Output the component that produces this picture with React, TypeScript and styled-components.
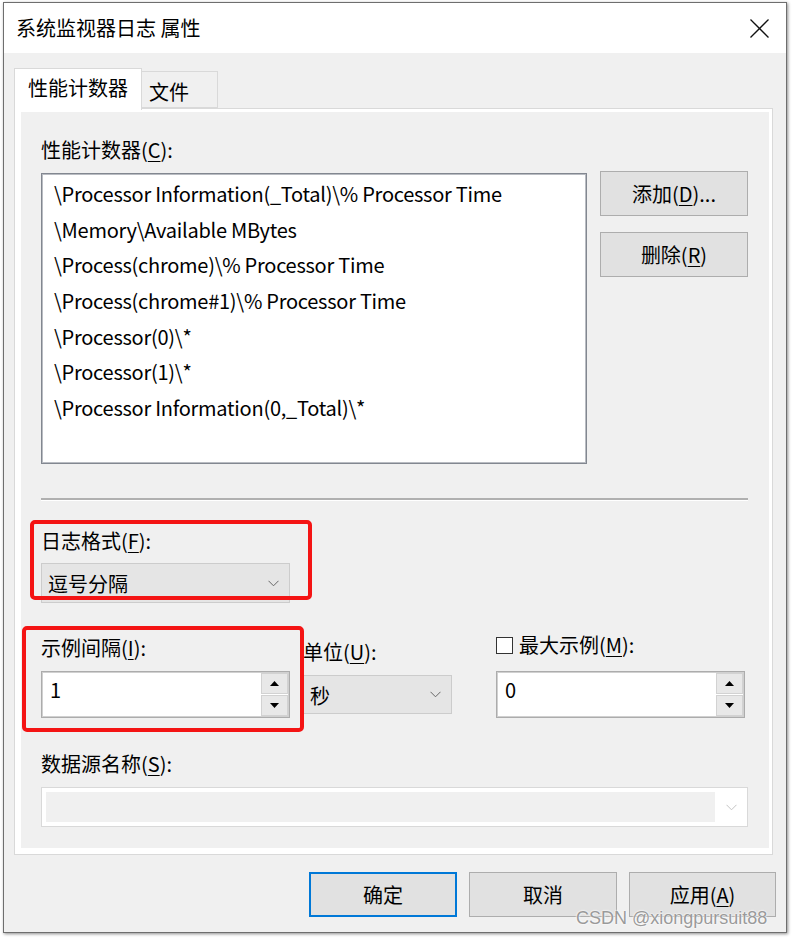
import React from "react";
import styled, { createGlobalStyle } from "styled-components";

const Global = createGlobalStyle`
  html, body { margin: 0; padding: 0; background: #ffffff; }
  body { font-family: "Noto Sans CJK SC", "Noto Sans", sans-serif; color: #000; }
  * { box-sizing: border-box; }
`;

const Page = styled.div`
  position: relative;
  width: 792px;
  height: 939px;
  overflow: hidden;
  background: #ffffff;
  padding: 2px 0 0 3px;
`;

const Window = styled.div`
  width: 784px;
  height: 931px;
  border: 1px solid #6e6e6e;
  box-shadow: 1px 1px 3px rgba(0, 0, 0, 0.45);
  display: flex;
  flex-direction: column;
  background: #f0f0f0;
`;

const TitleBar = styled.div`
  height: 50px;
  flex: none;
  background: #ffffff;
  display: flex;
  align-items: center;
  justify-content: space-between;
  padding: 0 17px 0 12px;
`;

const Title = styled.div`
  font-size: 20px;
  line-height: 24px;
  color: #000;
`;

const CloseBtn = styled.div`
  width: 20px;
  height: 20px;
  display: flex;
  align-items: center;
  justify-content: center;
`;

const Body = styled.div`
  flex: 1;
  display: flex;
  flex-direction: column;
  padding: 15px 9px 0 10px;
`;

const TabRow = styled.div`
  display: flex;
  align-items: flex-start;
  height: 40px;
  position: relative;
  z-index: 1;
`;

const Tab = styled.div<{ $active?: boolean }>`
  font-size: 20px;
  line-height: 24px;
  display: flex;
  align-items: center;
  border: 1px solid #d9d9d9;
  ${(p) =>
    p.$active
      ? `
    width: 128px;
    height: 42px;
    background: #ffffff;
    border-bottom: none;
    padding: 0 0 3px 13px;
  `
      : `
    width: 76px;
    height: 37px;
    margin-top: 3px;
    background: #f0f0f0;
    border-left: none;
    padding: 4px 0 0 7px;
  `}
`;

const Panel = styled.div`
  margin-right: 4px;
  height: 747px;
  border: 1px solid #d9d9d9;
  background: #ffffff;
  padding: 3px 3px 6px 6px;
  display: flex;
`;

const PanelInner = styled.div`
  flex: 1;
  background: #f0f0f0;
  padding: 26px 21px 0 20px;
  display: flex;
  flex-direction: column;
`;

const Label = styled.div<{ $mt?: number }>`
  font-size: 20px;
  line-height: 24px;
  height: 24px;
  white-space: nowrap;
  margin-top: ${(p) => p.$mt ?? 0}px;
  display: flex;
  align-items: center;
`;

const U = styled.span`
  text-decoration: underline;
  text-underline-offset: 3px;
  text-decoration-thickness: 1px;
`;

const CounterRow = styled.div`
  display: flex;
  align-items: flex-start;
  margin-top: 11px;
  gap: 13px;
`;

const ListBox = styled.div`
  width: 546px;
  height: 291px;
  background: #ffffff;
  border: 1px solid #828790;
  box-shadow: inset 0 0 0 1px #b9bcc2;
  padding: 2px 0 0 12px;
`;

const ListItem = styled.div`
  font-size: 20px;
  line-height: 35.67px;
  height: 35.67px;
  letter-spacing: -0.26px;
  white-space: nowrap;
`;

const SideButtons = styled.div`
  display: flex;
  flex-direction: column;
  gap: 16px;
  margin-top: -2px;
`;

const Button = styled.div<{ $primary?: boolean; $w?: number }>`
  width: ${(p) => p.$w ?? 148}px;
  height: 45px;
  background: #e1e1e1;
  border: ${(p) => (p.$primary ? "2px solid #0078d7" : "1px solid #adadad")};
  font-size: 20px;
  line-height: 24px;
  display: flex;
  align-items: center;
  justify-content: center;
  white-space: nowrap;
`;

const Separator = styled.div`
  margin-top: 34px;
  height: 3px;
  border-top: 2px solid #b0b0b0;
  border-bottom: 1px solid #ffffff;
`;

const Group = styled.div<{ $mt?: number; $w?: number }>`
  position: relative;
  margin-top: ${(p) => p.$mt ?? 0}px;
  width: ${(p) => (p.$w ? `${p.$w}px` : "auto")};
  display: flex;
  flex-direction: column;
  flex: none;
`;

const RedBox = styled.div<{ $l: number; $t: number; $w: number; $h: number }>`
  position: absolute;
  left: ${(p) => p.$l}px;
  top: ${(p) => p.$t}px;
  width: ${(p) => p.$w}px;
  height: ${(p) => p.$h}px;
  border: 4px solid #f41414;
  border-radius: 5px;
  pointer-events: none;
  z-index: 2;
`;

const Combo = styled.div<{ $w: number; $h: number; $mt: number; $pl?: number }>`
  width: ${(p) => p.$w}px;
  height: ${(p) => p.$h}px;
  margin-top: ${(p) => p.$mt}px;
  background: #e5e5e5;
  border: 1px solid #cccccc;
  display: flex;
  align-items: center;
  justify-content: space-between;
  padding: 0 10px 0 ${(p) => p.$pl ?? 6}px;
  font-size: 20px;
  line-height: 24px;
`;

const ComboText = styled.span`
  padding-top: 2px;
`;

const FieldRow = styled.div`
  display: flex;
  align-items: flex-start;
  margin-top: 33px;
`;

const Spin = styled.div<{ $mt: number }>`
  width: 249px;
  height: 47px;
  margin-top: ${(p) => p.$mt}px;
  background: #ffffff;
  border: 1px solid #acacac;
  box-shadow: inset 0 0 0 1px #d0d0d0;
  display: flex;
  padding: 1px;
`;

const SpinValue = styled.div`
  flex: 1;
  font-size: 20px;
  line-height: 24px;
  padding: 5px 0 0 7px;
`;

const SpinButtons = styled.div`
  width: 27px;
  display: flex;
  flex-direction: column;
  gap: 1px;
`;

const SpinBtn = styled.div`
  flex: 1;
  background: #e8e8e8;
  border: 1px solid #d2d2d2;
  display: flex;
  align-items: center;
  justify-content: center;
`;

const CheckLabel = styled.div`
  display: flex;
  align-items: center;
  gap: 6px;
  font-size: 20px;
  line-height: 24px;
  height: 24px;
  white-space: nowrap;
`;

const CheckBox = styled.span`
  width: 17px;
  height: 17px;
  border: 1px solid #333333;
  background: #ffffff;
  flex: none;
`;

const DisabledCombo = styled.div`
  margin-top: 11px;
  height: 40px;
  border: 1px solid #d9d9d9;
  background: #ffffff;
  display: flex;
  align-items: stretch;
  padding: 4px 0 4px 4px;
`;

const DisabledField = styled.div`
  flex: 1;
  background: #f0f0f0;
`;

const DisabledArrow = styled.div`
  width: 32px;
  display: flex;
  align-items: center;
  justify-content: center;
`;

const Footer = styled.div`
  display: flex;
  justify-content: flex-end;
  gap: 12px;
  margin-top: 17px;
  margin-right: 1px;
`;

const Watermark = styled.div`
  position: absolute;
  left: 576px;
  top: 907px;
  font-family: "Liberation Sans", Arial, sans-serif;
  font-size: 18px;
  line-height: 22px;
  color: #9a9a9a;
  text-shadow: 0 0 2px #ffffff, 0 0 2px #ffffff;
  white-space: nowrap;
`;

const Chevron = ({ color = "#666" }: { color?: string }) => (
  <svg width="11" height="7" viewBox="0 0 11 7">
    <polyline points="0.5,0.8 5.5,5.8 10.5,0.8" fill="none" stroke={color} strokeWidth="1" />
  </svg>
);

const Up = () => (
  <svg width="9" height="5" viewBox="0 0 9 5">
    <polygon points="4.5,0 9,5 0,5" fill="#000" />
  </svg>
);

const Down = () => (
  <svg width="9" height="5" viewBox="0 0 9 5">
    <polygon points="0,0 9,0 4.5,5" fill="#000" />
  </svg>
);

const SpinBox = ({ value, mt }: { value: string; mt: number }) => (
  <Spin $mt={mt}>
    <SpinValue>{value}</SpinValue>
    <SpinButtons>
      <SpinBtn>
        <Up />
      </SpinBtn>
      <SpinBtn>
        <Down />
      </SpinBtn>
    </SpinButtons>
  </Spin>
);

const counters = [
  "\\Processor Information(_Total)\\% Processor Time",
  "\\Memory\\Available MBytes",
  "\\Process(chrome)\\% Processor Time",
  "\\Process(chrome#1)\\% Processor Time",
  "\\Processor(0)\\*",
  "\\Processor(1)\\*",
  "\\Processor Information(0,_Total)\\*",
];

export default function App() {
  return (
    <Page>
      <Global />
      <Window>
        <TitleBar>
          <Title>系统监视器日志 属性</Title>
          <CloseBtn>
            <svg width="19" height="19" viewBox="0 0 19 19">
              <line x1="0.5" y1="0.5" x2="18.5" y2="18.5" stroke="#111" strokeWidth="1.3" />
              <line x1="18.5" y1="0.5" x2="0.5" y2="18.5" stroke="#111" strokeWidth="1.3" />
            </svg>
          </CloseBtn>
        </TitleBar>
        <Body>
          <TabRow>
            <Tab $active>性能计数器</Tab>
            <Tab>文件</Tab>
          </TabRow>
          <Panel>
            <PanelInner>
              <Label>
                性能计数器(<U>C</U>):
              </Label>
              <CounterRow>
                <ListBox>
                  {counters.map((c) => (
                    <ListItem key={c}>{c}</ListItem>
                  ))}
                </ListBox>
                <SideButtons>
                  <Button>
                    添加(<U>D</U>)...
                  </Button>
                  <Button>
                    删除(<U>R</U>)
                  </Button>
                </SideButtons>
              </CounterRow>
              <Separator />
              <Group $mt={28} $w={249}>
                <RedBox $l={-11} $t={-9} $w={282} $h={80} />
                <Label>
                  日志格式(<U>F</U>):
                </Label>
                <Combo $w={249} $h={40} $mt={10}>
                  <ComboText>逗号分隔</ComboText>
                  <Chevron />
                </Combo>
              </Group>
              <FieldRow>
                <Group $w={249}>
                  <RedBox $l={-19} $t={-10} $w={282} $h={106} />
                  <Label>
                    示例间隔(<U>I</U>):
                  </Label>
                  <SpinBox value="1" mt={11} />
                </Group>
                <Group $w={152} $mt={4} style={{ marginLeft: 10 }}>
                  <Label style={{ paddingLeft: 3 }}>
                    单位(<U>U</U>):
                  </Label>
                  <Combo $w={152} $h={39} $mt={11} $pl={9}>
                    <ComboText>秒</ComboText>
                    <Chevron />
                  </Combo>
                </Group>
                <Group $w={249} $mt={-3} style={{ marginLeft: 44 }}>
                  <CheckLabel>
                    <CheckBox />
                    <span>
                      最大示例(<U>M</U>):
                    </span>
                  </CheckLabel>
                  <SpinBox value="0" mt={14} />
                </Group>
              </FieldRow>
              <Label $mt={34}>
                数据源名称(<U>S</U>):
              </Label>
              <DisabledCombo>
                <DisabledField />
                <DisabledArrow>
                  <Chevron color="#c4c4c4" />
                </DisabledArrow>
              </DisabledCombo>
            </PanelInner>
          </Panel>
          <Footer>
            <Button $primary>确定</Button>
            <Button>取消</Button>
            <Button $w={147}>
              应用(<U>A</U>)
            </Button>
          </Footer>
        </Body>
      </Window>
      <Watermark>CSDN @xiongpursuit88</Watermark>
    </Page>
  );
}
